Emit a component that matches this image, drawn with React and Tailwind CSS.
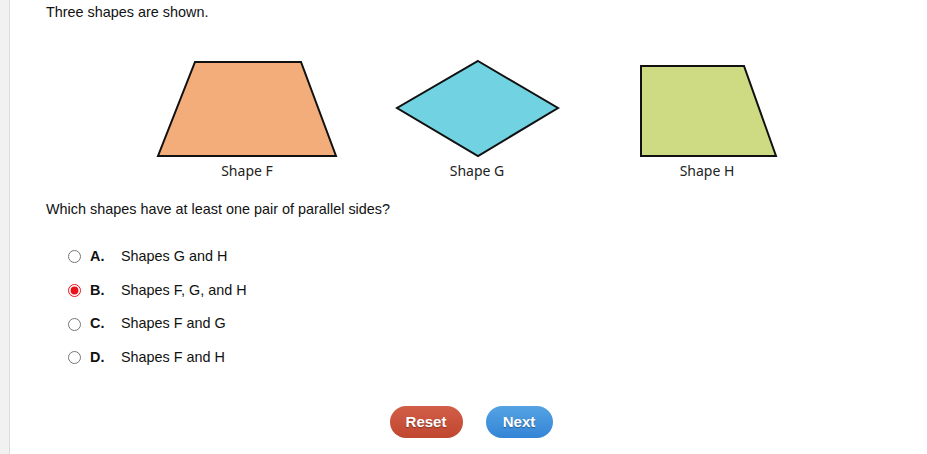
import React from 'react'

const SHAPES = [
  { id: 'F', fill: '#f2ad7b', points: '63,6 169,6 204,100 26,100' },
  { id: 'G', fill: '#71d2e1', points: '116,5 196,52 116,100 35,52' },
  { id: 'H', fill: '#cfdb83', points: '49,10 152,10 184,100 49,100' },
]

const OPTIONS = [
  { key: 'A', text: 'Shapes G and H' },
  { key: 'B', text: 'Shapes F, G, and H' },
  { key: 'C', text: 'Shapes F and G' },
  { key: 'D', text: 'Shapes F and H' },
]

export default function App() {
  const selected = 'B'
  return (
    <div className="flex min-h-[454px] w-[927px] bg-white text-[14.4px] text-[#111] font-['Liberation_Sans',Arial,sans-serif]">
      <div className="w-[10px] shrink-0 bg-[#f1f1f1] border-r border-[#dcdcdc]" />
      <div className="flex-1 pl-[36px]">
        <p className="pt-[4px] leading-[16px]">Three shapes are shown.</p>

        {/* figure */}
        <div className="flex ml-[86px] mt-[36px]">
          {SHAPES.map(s => (
            <div key={s.id} className="w-[230px] flex flex-col items-center">
              <svg width="230" height="102" viewBox="0 0 230 102">
                <polygon points={s.points} fill={s.fill} stroke="#111" strokeWidth="2" strokeLinejoin="miter" />
              </svg>
              <span className="mt-[5px] text-[14px] leading-[16px] text-[#222] font-['Noto_Sans',sans-serif]">
                Shape {s.id}
              </span>
            </div>
          ))}
        </div>

        <p className="mt-[22px] leading-[16px]">Which shapes have at least one pair of parallel sides?</p>

        <div className="mt-[23px] ml-[22px] flex flex-col">
          {OPTIONS.map(o => (
            <label key={o.key} className="flex items-center h-[33.7px]">
              <input
                type="radio"
                name="answer"
                readOnly
                checked={o.key === selected}
                className="m-0 w-[13px] h-[13px] accent-[#e8131b]"
              />
              <span className="ml-[9px] w-[31px] font-bold">{o.key}.</span>
              <span>{o.text}</span>
            </label>
          ))}
        </div>

        <div className="flex justify-center gap-[23px] mt-[31px] pr-[31px]">
          <button className="w-[73px] h-[32px] rounded-full bg-gradient-to-b from-[#d25e48] to-[#c0462f] text-white font-bold text-[15px] [text-shadow:0_1px_1px_rgba(0,0,0,0.35)]">
            Reset
          </button>
          <button className="w-[67px] h-[32px] rounded-full bg-gradient-to-b from-[#55a3e3] to-[#3384d6] text-white font-bold text-[15px] [text-shadow:0_1px_1px_rgba(0,0,0,0.35)]">
            Next
          </button>
        </div>
      </div>
    </div>
  )
}
